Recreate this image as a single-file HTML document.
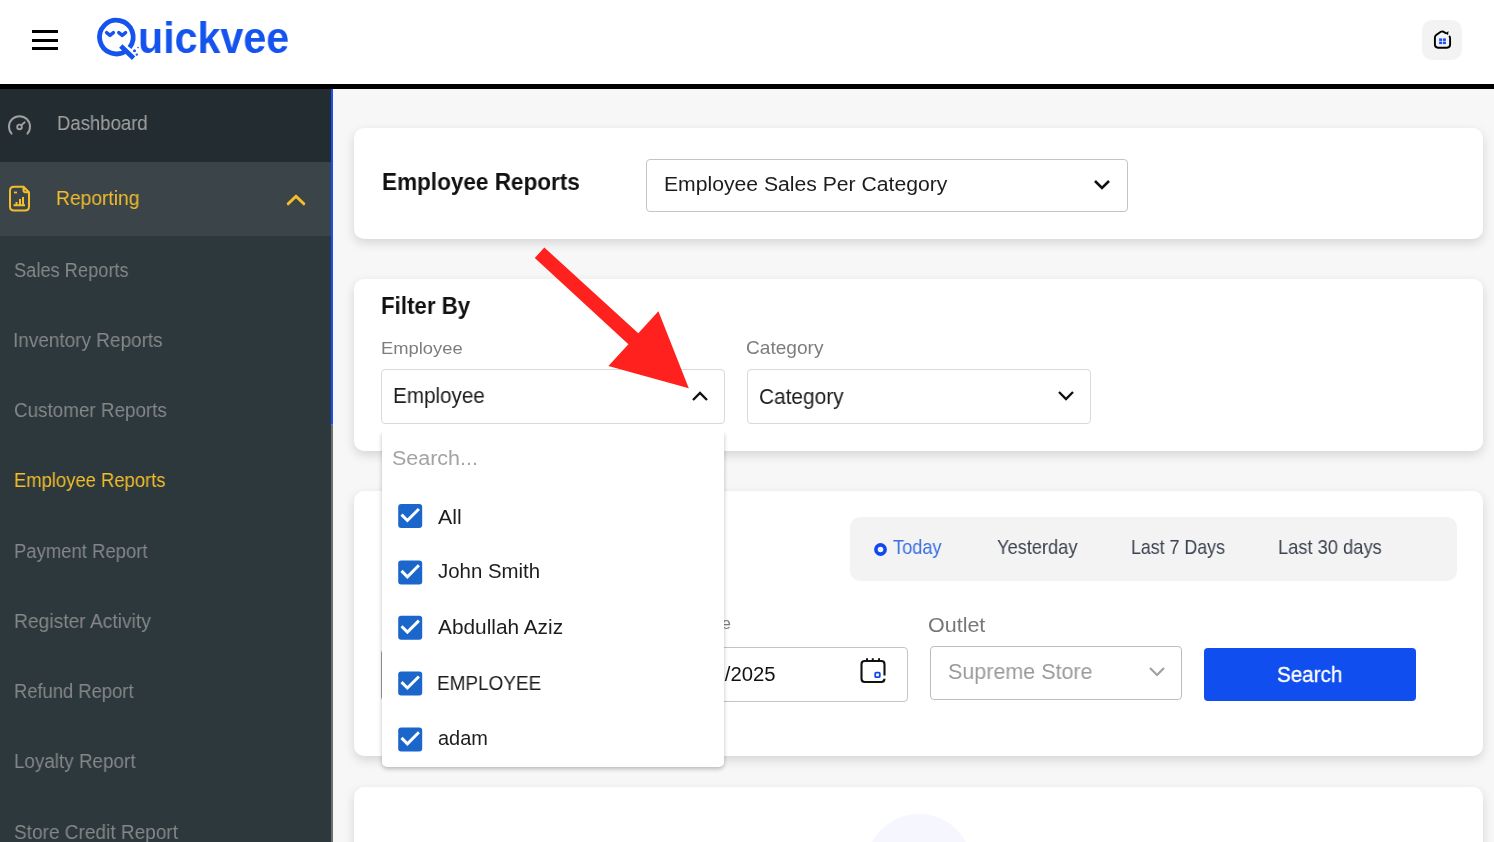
<!DOCTYPE html>
<html><head><meta charset="utf-8">
<style>
*{margin:0;padding:0;box-sizing:border-box}
html,body{width:1494px;height:842px;overflow:hidden;background:#f7f7f7;font-family:"Liberation Sans",sans-serif}
.a{position:absolute}
.t{position:absolute;white-space:nowrap;line-height:1;transform-origin:0 0;will-change:transform}
#hdr{left:0;top:0;width:1494px;height:84px;background:#fff}
#hline{left:0;top:84px;width:1494px;height:5px;background:#000}
#side{left:0;top:89px;width:331px;height:753px;background:#2d383c}
#dash{left:0;top:89px;width:331px;height:73px;background:#232c30}
#rep{left:0;top:162px;width:331px;height:74px;background:#3a4449}
#sbthumb{left:331px;top:89px;width:2px;height:336px;background:#1a4ff5;border-radius:0 0 1px 1px}
#sbtrack{left:331px;top:425px;width:2px;height:417px;background:#6b6f70}
.card{position:absolute;left:354px;width:1129px;background:#fff;border-radius:10px;box-shadow:0 4px 11px rgba(0,0,0,0.14)}
.sel{position:absolute;background:#fff;border:1px solid #c4c4c4;border-radius:4px}
.side{color:#858788;font-size:18px}
</style></head><body>
<div class="a" id="hdr"></div>
<div class="a" id="hline"></div>
<!-- hamburger -->
<div class="a" style="left:31.5px;top:30px;width:26.8px;height:3px;background:#000"></div>
<div class="a" style="left:31.5px;top:38.5px;width:26.8px;height:3px;background:#000"></div>
<div class="a" style="left:31.5px;top:47px;width:26.8px;height:3px;background:#000"></div>
<!-- logo -->
<svg class="a" style="left:90px;top:12px" width="60" height="54" viewBox="0 0 60 54">
  <path d="M37.1 38.0 A16.8 16.8 0 1 1 39.54 35.5" fill="none" stroke="#1553ef" stroke-width="4.8"/>
  <path d="M16.6 20.6 L20 23.4 L23.4 20.6 M28.8 20.6 L32.2 23.4 L35.6 20.6" fill="none" stroke="#1553ef" stroke-width="3.4" stroke-linecap="round" stroke-linejoin="round"/>
  <path d="M30.8 34 L43.6 46.2" stroke="#1553ef" stroke-width="4.8"/>
  <circle cx="44.5" cy="38.7" r="1.5" fill="#1553ef"/><circle cx="46.8" cy="42.6" r="1.2" fill="#1553ef"/><circle cx="48" cy="35.6" r="0.8" fill="#1553ef"/>
</svg>
<div id="tLogo" class="t" style="left:137.63px;top:15.98px;font-size:44.49px;transform:scaleX(0.926);font-weight:bold;color:#1553ef">uickvee</div>
<!-- header right button -->
<div class="a" style="left:1422px;top:20px;width:40px;height:40px;background:#f3f3f3;border-radius:10px"></div>
<svg class="a" style="left:1430px;top:28px" width="24" height="24" viewBox="0 0 24 24">
  <path d="M16.2 5.3 L13.2 3.7 Q12 3.1 10.8 3.8 L6.2 7 Q4.9 8 4.9 9.8 V16.6 Q4.9 19.7 8 19.7 H17 Q20.1 19.7 20.1 16.6 V10.4 Q20.1 8.9 19.1 8" fill="none" stroke="#000" stroke-width="1.9"/>
  <path d="M15.3 5.4 L18.5 3.1 L18.1 6.9 Z" fill="#000"/>
  <rect x="9.1" y="10.4" width="3" height="2.5" fill="#1a4ff5"/><rect x="12.9" y="10.4" width="3" height="2.5" fill="#1a4ff5"/>
  <rect x="9.1" y="13.6" width="3" height="2.5" fill="#1a4ff5"/><rect x="12.9" y="13.6" width="3" height="2.5" fill="#1a4ff5"/>
</svg>

<!-- sidebar -->
<div class="a" id="side"></div>
<div class="a" id="dash"></div>
<div class="a" id="rep"></div>
<div class="a" id="sbthumb"></div>
<div class="a" id="sbtrack"></div>
<svg class="a" style="left:6px;top:113px" width="28" height="24" viewBox="0 0 28 24">
  <path d="M5.6 20.6 A10.5 10.5 0 1 1 21.4 20.6" fill="none" stroke="#a0a0a0" stroke-width="2" stroke-linecap="round"/>
  <circle cx="13.5" cy="13.9" r="2.3" fill="none" stroke="#a0a0a0" stroke-width="1.9"/>
  <path d="M15.2 12.2 L18.7 9.3" stroke="#a0a0a0" stroke-width="1.8" stroke-linecap="round"/>
</svg>
<div id="tDash" class="t side" style="left:57.08px;top:114.32px;font-size:19.86px;transform:scaleX(0.933);color:#a3a3a3">Dashboard</div>
<svg class="a" style="left:8px;top:185px" width="24" height="28" viewBox="0 0 24 28">
  <path d="M15.5 1.8 H6 Q2 1.8 2 5.8 V21.5 Q2 25.5 6 25.5 H17 Q21 25.5 21 21.5 V7.3" fill="none" stroke="#f4be2b" stroke-width="2"/>
  <path d="M15.5 1.8 L21 7.3 H17.5 Q15.5 7.3 15.5 5.3 Z" fill="none" stroke="#f4be2b" stroke-width="2" stroke-linejoin="round"/>
  <path d="M6 7.5 H9" stroke="#f4be2b" stroke-width="1.8"/>
  <path d="M5.5 20.3 H17 M8.5 20.3 V17 M12 20.3 V14 M15 20.3 V12" stroke="#f4be2b" stroke-width="2"/>
</svg>
<div id="tRep" class="t side" style="left:56.01px;top:188.97px;font-size:19.57px;transform:scaleX(0.983);color:#f4be2b">Reporting</div>
<svg class="a" style="left:285px;top:191px" width="22" height="16" viewBox="0 0 22 16">
  <path d="M3.2 12.8 L11 5.2 L18.8 12.8" fill="none" stroke="#f6bf29" stroke-width="3" stroke-linecap="round" stroke-linejoin="round"/>
</svg>
<div id="tSales" class="t side" style="left:13.61px;top:259.60px;font-size:20.00px;transform:scaleX(0.913);">Sales Reports</div>
<div id="tInv" class="t side" style="left:13.09px;top:329.85px;font-size:20.00px;transform:scaleX(0.948);">Inventory Reports</div>
<div id="tCust" class="t side" style="left:13.58px;top:400.10px;font-size:20.00px;transform:scaleX(0.942);">Customer Reports</div>
<div id="tEmpR" class="t side" style="left:14.05px;top:470.35px;font-size:20.00px;transform:scaleX(0.921);color:#f4be2b">Employee Reports</div>
<div id="tPay" class="t side" style="left:14.04px;top:540.60px;font-size:20.00px;transform:scaleX(0.924);">Payment Report</div>
<div id="tReg" class="t side" style="left:14.02px;top:610.85px;font-size:20.00px;transform:scaleX(0.962);">Register Activity</div>
<div id="tRef" class="t side" style="left:14.05px;top:681.10px;font-size:20.00px;transform:scaleX(0.919);">Refund Report</div>
<div id="tLoy" class="t side" style="left:14.04px;top:751.35px;font-size:20.00px;transform:scaleX(0.942);">Loyalty Report</div>
<div id="tSC" class="t side" style="left:13.56px;top:821.60px;font-size:20.00px;transform:scaleX(0.952);">Store Credit Report</div>

<!-- card 1 -->
<div class="card" style="top:127.5px;height:111.5px"></div>
<div id="tTitle" class="t" style="left:381.53px;top:171.04px;font-size:23.48px;transform:scaleX(0.960);font-weight:bold;color:#111">Employee Reports</div>
<div class="sel" style="left:646px;top:159px;width:482px;height:53px"></div>
<div id="tSel" class="t" style="left:664.47px;top:174.48px;font-size:20.72px;transform:scaleX(1.021);color:#1d1d1d">Employee Sales Per Category</div>
<svg class="a" style="left:1092px;top:178px" width="20" height="14" viewBox="0 0 20 14">
  <path d="M3 3 L10 10 L17 3" fill="none" stroke="#111" stroke-width="2.6"/>
</svg>

<!-- card 2 -->
<div class="card" style="top:278.6px;height:172.3px"></div>
<div id="tFilter" class="t" style="left:381.07px;top:293.87px;font-size:23.91px;transform:scaleX(0.933);font-weight:bold;color:#111">Filter By</div>
<div id="tEmpL" class="t" style="left:380.94px;top:339.94px;font-size:17.25px;transform:scaleX(1.064);color:#7d7d7d">Employee</div>
<div class="sel" style="left:381px;top:369px;width:344px;height:55px;border-color:#d9d9d9"></div>
<div id="tEmpS" class="t" style="left:392.54px;top:385.59px;font-size:21.30px;transform:scaleX(0.970);color:#1d1d1d">Employee</div>
<svg class="a" style="left:690px;top:389px" width="20" height="14" viewBox="0 0 20 14">
  <path d="M3 11 L10 4 L17 11" fill="none" stroke="#111" stroke-width="2.4"/>
</svg>
<div id="tCatL" class="t" style="left:746.48px;top:338.63px;font-size:18.55px;transform:scaleX(1.030);color:#7d7d7d">Category</div>
<div class="sel" style="left:747px;top:369px;width:344px;height:55px;border-color:#d9d9d9"></div>
<div id="tCatS" class="t" style="left:758.52px;top:387.27px;font-size:21.45px;transform:scaleX(0.972);color:#1d1d1d">Category</div>
<svg class="a" style="left:1056px;top:389px" width="20" height="14" viewBox="0 0 20 14">
  <path d="M3 3 L10 10 L17 3" fill="none" stroke="#111" stroke-width="2.4"/>
</svg>

<!-- card 3 -->
<div class="card" style="top:490.6px;height:265px"></div>
<div class="a" style="left:850px;top:517px;width:607px;height:64px;background:#f3f3f3;border-radius:10px"></div>
<svg class="a" style="left:873px;top:542px" width="15" height="15" viewBox="0 0 15 15">
  <circle cx="7.5" cy="7.5" r="4.6" fill="none" stroke="#1148ee" stroke-width="3.6"/>
</svg>
<div id="tToday" class="t" style="left:893.00px;top:537.89px;font-size:19.42px;transform:scaleX(0.939);color:#3a6fe3">Today</div>
<div id="tYest" class="t" style="left:996.53px;top:537.89px;font-size:19.42px;transform:scaleX(0.940);color:#3c4350">Yesterday</div>
<div id="tL7" class="t" style="left:1130.59px;top:537.89px;font-size:19.42px;transform:scaleX(0.917);color:#3c4350">Last 7 Days</div>
<div id="tL30" class="t" style="left:1277.56px;top:537.89px;font-size:19.42px;transform:scaleX(0.943);color:#3c4350">Last 30 days</div>

<div class="t" style="left:381px;top:615px;font-size:17px;color:#7d7d7d">Start Date</div>
<div class="sel" style="left:381px;top:649px;width:264px;height:52px;border-color:#9a9a9a"></div>
<div class="t" style="left:660px;top:615px;font-size:17px;color:#7d7d7d">End Date</div>
<div class="sel" style="left:664px;top:647px;width:244px;height:55px;border-color:#c4c4c4"></div>
<div id="tDate" class="t" style="left:673.80px;top:663.85px;font-size:20.29px;transform:scaleX(1.000);color:#111">01/09/2025</div>
<svg class="a" style="left:858px;top:656px" width="30" height="30" viewBox="0 0 30 30">
  <path d="M26.5 19.5 V8.2 Q26.5 5 23.3 5 H6.7 Q3.5 5 3.5 8.2 V22.8 Q3.5 26 6.7 26 H23.3 Q26.5 26 26.5 22.8" fill="none" stroke="#111" stroke-width="2.1"/>
  <path d="M9 2.2 V6 M14.8 2.2 V6 M21 2.2 V6" stroke="#111" stroke-width="2"/>
  <rect x="17.2" y="16.6" width="4.6" height="4.6" rx="1" fill="none" stroke="#1148ee" stroke-width="1.8"/>
</svg>
<div id="tOutlet" class="t" style="left:928.41px;top:614.88px;font-size:20.14px;transform:scaleX(1.068);color:#777">Outlet</div>
<div class="sel" style="left:930px;top:646px;width:252px;height:54px;border-color:#bdbdbd"></div>
<div id="tSupreme" class="t" style="left:947.52px;top:660.92px;font-size:21.74px;transform:scaleX(0.989);color:#9a9a9a">Supreme Store</div>
<svg class="a" style="left:1147px;top:664px" width="20" height="16" viewBox="0 0 20 16">
  <path d="M3 4 L10 11 L17 4" fill="none" stroke="#a0a0a0" stroke-width="2.2"/>
</svg>
<div class="a" style="left:1204px;top:648px;width:212px;height:53px;background:#104ef0;border-radius:4px"></div>
<div id="tSearchB" class="t" style="left:1277.11px;top:663.46px;font-size:22.75px;transform:scaleX(0.906);color:#fff;-webkit-text-stroke:0.35px #fff">Search</div>

<!-- card 4 -->
<div class="card" style="top:787.3px;height:80px"></div>
<div class="a" style="left:866px;top:814px;width:106px;height:106px;border-radius:50%;background:#f6f7fe"></div>

<!-- dropdown panel -->
<div class="a" style="left:382px;top:432px;width:342px;height:335.2px;background:#fff;border-radius:0 0 5px 5px;box-shadow:0 2px 4px rgba(0,0,0,0.25);clip-path:inset(0 -10px -10px -10px)"></div>
<div id="tSearchPh" class="t" style="left:392.44px;top:447.80px;font-size:20.00px;transform:scaleX(1.074);color:#a3a3a3">Search...</div>
<!-- checkboxes -->
<div id="cbs"></div>
<svg class="a" style="left:398px;top:504.2px" width="25" height="250" viewBox="0 0 25 250">
  <g id="cb"><rect x="0.2" y="0.1" width="24" height="24" rx="3" fill="#1a66cb"/><path d="M3.5 10.6 L9.4 16.5 L20.9 5" fill="none" stroke="#fff" stroke-width="3"/></g>
  <use href="#cb" y="56.3"/><use href="#cb" y="111.6"/><use href="#cb" y="167.5"/><use href="#cb" y="223.3"/>
</svg>
<div id="tAll" class="t" style="left:438.03px;top:508.22px;font-size:19.86px;transform:scaleX(1.074);color:#1d1d1d">All</div>
<div id="tJohn" class="t" style="left:438.01px;top:562.12px;font-size:19.86px;transform:scaleX(1.028);color:#1d1d1d">John Smith</div>
<div id="tAbd" class="t" style="left:438.01px;top:618.12px;font-size:19.86px;transform:scaleX(1.049);color:#1d1d1d">Abdullah Aziz</div>
<div id="tEMP" class="t" style="left:437.05px;top:674.12px;font-size:19.86px;transform:scaleX(0.954);color:#1d1d1d">EMPLOYEE</div>
<div id="tAdam" class="t" style="left:438.00px;top:728.72px;font-size:19.86px;transform:scaleX(1.004);color:#1d1d1d">adam</div>

<!-- red arrow -->
<svg class="a" style="left:0;top:0" width="1494" height="842" viewBox="0 0 1494 842">
  <path d="M534.8 258.1 L544.3 247.6 L638.3 333.2 L658.4 311.3 L688.8 388.3 L608.4 365.9 L628.4 344.2 Z" fill="#fe211d"/>
</svg>
</body></html>
